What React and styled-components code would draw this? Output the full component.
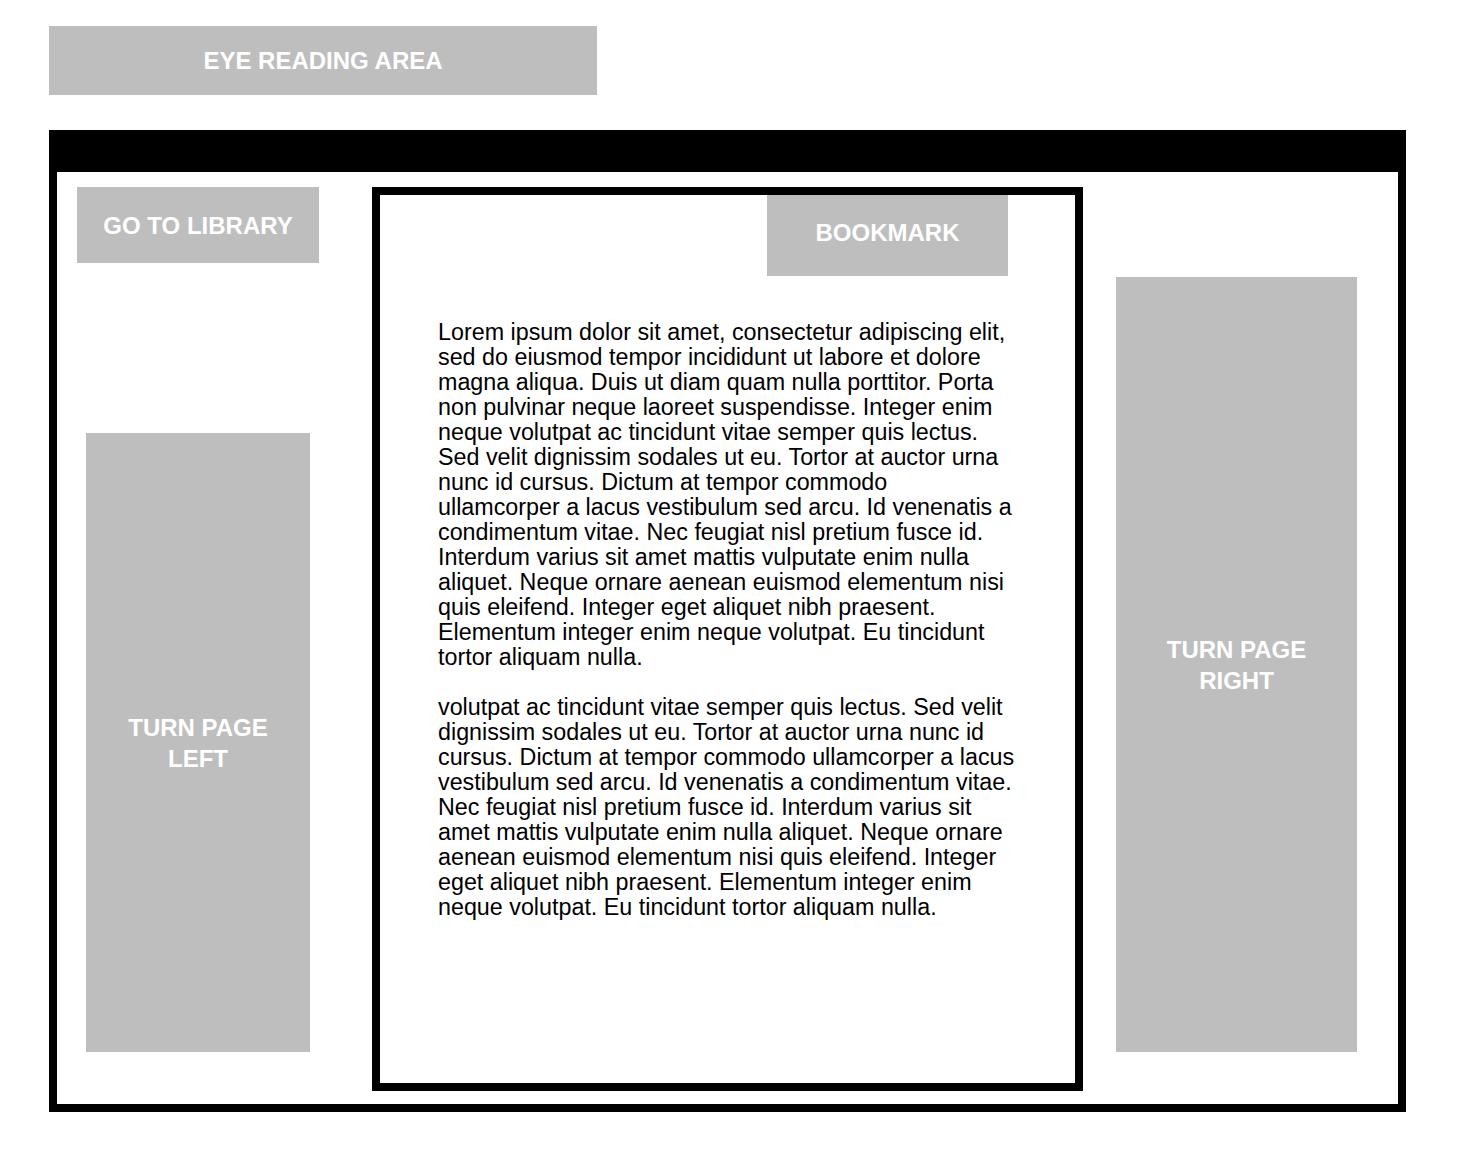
import styled, { createGlobalStyle } from 'styled-components';

const GlobalStyle = createGlobalStyle`
  html, body {
    margin: 0;
    padding: 0;
    background: #fff;
  }

  body {
    font-family: 'Liberation Sans', Arial, Helvetica, sans-serif;
  }
`;

const para1 = [
  'Lorem ipsum dolor sit amet, consectetur adipiscing elit,',
  'sed do eiusmod tempor incididunt ut labore et dolore',
  'magna aliqua. Duis ut diam quam nulla porttitor. Porta',
  'non pulvinar neque laoreet suspendisse. Integer enim',
  'neque volutpat ac tincidunt vitae semper quis lectus.',
  'Sed velit dignissim sodales ut eu. Tortor at auctor urna',
  'nunc id cursus. Dictum at tempor commodo',
  'ullamcorper a lacus vestibulum sed arcu. Id venenatis a',
  'condimentum vitae. Nec feugiat nisl pretium fusce id.',
  'Interdum varius sit amet mattis vulputate enim nulla',
  'aliquet. Neque ornare aenean euismod elementum nisi',
  'quis eleifend. Integer eget aliquet nibh praesent.',
  'Elementum integer enim neque volutpat. Eu tincidunt',
  'tortor aliquam nulla.',
];

const para2 = [
  'volutpat ac tincidunt vitae semper quis lectus. Sed velit',
  'dignissim sodales ut eu. Tortor at auctor urna nunc id',
  'cursus. Dictum at tempor commodo ullamcorper a lacus',
  'vestibulum sed arcu. Id venenatis a condimentum vitae.',
  'Nec feugiat nisl pretium fusce id. Interdum varius sit',
  'amet mattis vulputate enim nulla aliquet. Neque ornare',
  'aenean euismod elementum nisi quis eleifend. Integer',
  'eget aliquet nibh praesent. Elementum integer enim',
  'neque volutpat. Eu tincidunt tortor aliquam nulla.',
];

const Lines = ({ lines }) =>
  lines.map((line, i) => (
    <span key={i}>
      {line}
      <br />
    </span>
  ));

const App = () => {
  return (
    <Page>
      <GlobalStyle />
      <TitleBar>EYE READING AREA</TitleBar>
      <Frame>
        <FrameBody>
          <LeftColumn>
            <LibraryButton>GO TO LIBRARY</LibraryButton>
            <TurnButton $side="left">
              TURN PAGE
              <br />
              LEFT
            </TurnButton>
          </LeftColumn>

          <BookPage>
            <BookmarkRow>
              <BookmarkButton>BOOKMARK</BookmarkButton>
            </BookmarkRow>
            <Reading>
              <p>
                <Lines lines={para1} />
              </p>
              <p>
                <Lines lines={para2} />
              </p>
            </Reading>
          </BookPage>

          <RightColumn>
            <TurnButton $side="right">
              TURN PAGE
              <br />
              RIGHT
            </TurnButton>
          </RightColumn>
        </FrameBody>
      </Frame>
    </Page>
  );
};

export default App;

const Page = styled.div`
  padding: 26px 0 0 49px;
  width: 1357px;
`;

const GrayBox = styled.div`
  background: #bebebe;
  color: #fff;
  font-weight: bold;
  font-size: 24px;
  line-height: 31px;
  display: flex;
  align-items: center;
  justify-content: center;
  text-align: center;
  box-sizing: border-box;
`;

const TitleBar = styled(GrayBox)`
  width: 548px;
  height: 69px;
`;

const Frame = styled.div`
  margin-top: 35px;
  border: 8px solid #000;
  border-top-width: 42px;
  height: 932px;
`;

const FrameBody = styled.div`
  display: grid;
  grid-template-columns: 315px 711px 1fr;
  height: 100%;
`;

const LeftColumn = styled.div`
  display: flex;
  flex-direction: column;
  align-items: flex-start;
  padding: 15px 0 0 20px;
`;

const LibraryButton = styled(GrayBox)`
  width: 242px;
  height: 76px;
`;

const TurnButton = styled(GrayBox)`
  width: ${(p) => (p.$side === 'left' ? '224px' : '241px')};
  height: ${(p) => (p.$side === 'left' ? '619px' : '775px')};
  margin: ${(p) => (p.$side === 'left' ? '170px 0 0 9px' : '0')};
`;

const BookPage = styled.div`
  margin-top: 15px;
  height: 904px;
  border: 8px solid #000;
  box-sizing: border-box;
  display: flex;
  flex-direction: column;
`;

const BookmarkRow = styled.div`
  display: flex;
  justify-content: flex-end;
  padding-right: 67px;
`;

const BookmarkButton = styled(GrayBox)`
  width: 241px;
  height: 81px;
  padding-bottom: 6px;
`;

const Reading = styled.div`
  padding: 44px 0 0 58px;
  font-size: 23.3px;
  line-height: 25px;
  color: #000;
  white-space: nowrap;

  p {
    margin: 0 0 25px 0;
  }
`;

const RightColumn = styled.div`
  padding: 105px 0 0 33px;
`;
